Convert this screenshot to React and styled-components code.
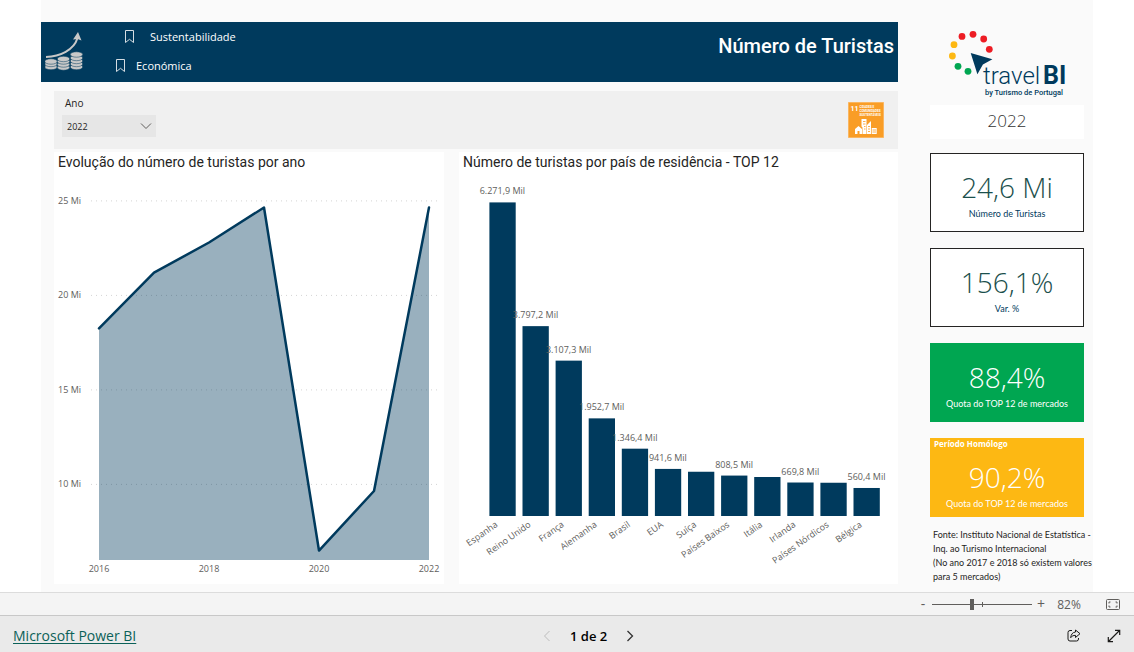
import { useState } from 'react';
import styled, { createGlobalStyle } from 'styled-components';

const COLORS = {
  navy: '#003a5d',
  text: '#252423',
  muted: '#605e5c',
  green: '#00a651',
  yellow: '#fdb813',
  red: '#ed1c24',
};

const FONTS = {
  base: "'Open Sans', 'Noto Sans', sans-serif",
  title: "Roboto, 'Liberation Sans', sans-serif",
  small: "Lato, 'Open Sans', sans-serif",
};

const YEARLY = [
  { year: 2016, value: 18.25 },
  { year: 2017, value: 21.2 },
  { year: 2018, value: 22.8 },
  { year: 2019, value: 24.65 },
  { year: 2020, value: 6.5 },
  { year: 2021, value: 9.65 },
  { year: 2022, value: 24.65 },
];

const COUNTRIES = [
  { name: 'Espanha', value: 6271.9, label: '6.271,9 Mil' },
  { name: 'Reino Unido', value: 3797.2, label: '3.797,2 Mil' },
  { name: 'França', value: 3107.3, label: '3.107,3 Mil' },
  { name: 'Alemanha', value: 1952.7, label: '1.952,7 Mil' },
  { name: 'Brasil', value: 1346.4, label: '1.346,4 Mil' },
  { name: 'EUA', value: 941.6, label: '941,6 Mil' },
  { name: 'Suíça', value: 885 },
  { name: 'Países Baixos', value: 808.5, label: '808,5 Mil' },
  { name: 'Itália', value: 780 },
  { name: 'Irlanda', value: 669.8, label: '669,8 Mil' },
  { name: 'Países Nórdicos', value: 665 },
  { name: 'Bélgica', value: 560.4, label: '560,4 Mil' },
];

const AreaChart = () => {
  const x = (year) => 45 + (year - 2016) * 55;
  const y = (value) => 388 - (value - 6) * 18.9;
  const line = YEARLY.map((d) => `${x(d.year)},${y(d.value)}`).join(' ');

  return (
    <Chart viewBox="0 0 390 412" role="img" aria-label="Evolução do número de turistas por ano">
      {[25, 20, 15, 10].map((tick) => (
        <g key={tick}>
          <GridLine x1="37" x2="385" y1={y(tick)} y2={y(tick)} />
          <ChartText x="4" y={y(tick) + 3}>
            {tick} Mi
          </ChartText>
        </g>
      ))}
      <polygon points={`45,388 ${line} 375,388`} fill={COLORS.navy} fillOpacity="0.4" />
      <polyline
        points={line}
        fill="none"
        stroke={COLORS.navy}
        strokeWidth="2.5"
        strokeLinejoin="round"
        strokeLinecap="round"
      />
      {[2016, 2018, 2020, 2022].map((year) => (
        <ChartText key={year} x={x(year)} y="400" textAnchor="middle">
          {year}
        </ChartText>
      ))}
    </Chart>
  );
};

const BarChart = () => {
  const x = (index) => 30.4 + index * 33.1;
  const height = (value) => value * 0.05;

  return (
    <Chart viewBox="0 0 439 412" role="img" aria-label="Número de turistas por país de residência">
      {COUNTRIES.map(({ name, value }, index) => (
        <rect
          key={name}
          x={x(index)}
          y={344 - height(value)}
          width="26.3"
          height={height(value)}
          fill={COLORS.navy}
        />
      ))}
      {COUNTRIES.map(({ name, value, label }, index) => (
        <g key={name}>
          <ChartText x={x(index) + 13} y={336 - height(value)} textAnchor="middle">
            {label}
          </ChartText>
          <ChartText
            textAnchor="end"
            transform={`translate(${x(index) + 9} 354) rotate(-35)`}
          >
            {name}
          </ChartText>
        </g>
      ))}
    </Chart>
  );
};

const BookmarkIcon = () => (
  <svg width="11" height="14" viewBox="0 0 11 14" fill="none" stroke="#d5dde3" aria-hidden="true">
    <path d="M1.500 .5h8v12L5.500 9.300 1.500 12.500z" />
  </svg>
);

const COINS = [
  { x: 6, levels: [36, 33, 30.5] },
  { x: 18.5, levels: [36.5, 33.5, 30.5, 28] },
  { x: 31.5, levels: [36, 33, 30, 27, 23.5] },
];

const CoinsIcon = () => (
  <svg width="40" height="42" viewBox="0 0 40 42" aria-hidden="true">
    <path d="M1 26C15 25.500 29 19 32.500 7" fill="none" stroke="#c8c8c8" strokeWidth="2" />
    <path d="M33 1l3.500 8.500-4-1.500-4.500 .5z" fill="#c8c8c8" />
    {COINS.map(({ x, levels }) =>
      levels.map((cy) => (
        <ellipse
          key={`${x}-${cy}`}
          cx={x}
          cy={cy}
          rx="6.200"
          ry="2.700"
          fill="#c8c8c8"
          stroke={COLORS.navy}
          strokeWidth=".5"
        />
      ))
    )}
  </svg>
);

const GoalIcon = () => (
  <svg width="36" height="36" viewBox="0 0 36 36" role="img" aria-label="Objetivo 11">
    <rect width="36" height="36" fill="#fbc27a" />
    <rect x=".7" y=".7" width="34.600" height="34.600" fill="#f99d26" />
    <g fill="#fff">
      <text x="2.500" y="9" fontFamily={FONTS.title} fontSize="7" fontWeight="700">
        11
      </text>
      <text fontFamily={FONTS.title} fontSize="3" fontWeight="700">
        <tspan x="11.500" y="6">CIDADES E</tspan>
        <tspan x="11.500" y="10">COMUNIDADES</tspan>
        <tspan x="11.500" y="14">SUSTENTÁVEIS</tspan>
      </text>
      <path d="M7 27l3.500-3 3.500 3v5h-2.500v-3h-2v3H7z" />
      <path d="M13.500 17h5v15h-4v-6.500l-1-1z" />
      <path d="M19 23l4-4v13h-4z" />
      <path d="M23.700 26h5v6h-5z" />
    </g>
    <path
      d="M15 19.500h2.500M15 22h2.500M16 24.500h1.500M16 27h1.500M20 24.500h2M20 27h2M20 29.500h2M24.500 28h3.500M24.500 30h3.500"
      stroke="#f99d26"
      strokeWidth=".8"
    />
  </svg>
);

const LOGO_DOTS = [
  { x: 20, y: 41.3, color: COLORS.green },
  { x: 10, y: 36.3, color: COLORS.green },
  { x: 4.4, y: 26, color: COLORS.yellow },
  { x: 6, y: 14.7, color: COLORS.yellow },
  { x: 14, y: 6.4, color: COLORS.red },
  { x: 25, y: 4.3, color: COLORS.red },
  { x: 35.7, y: 9, color: COLORS.red },
  { x: 41.3, y: 19.3, color: COLORS.red },
];

const Logo = () => (
  <svg width="118" height="68" viewBox="0 0 118 68" role="img" aria-label="travelBI">
    {LOGO_DOTS.map(({ x, y, color }) => (
      <circle key={`${x}-${y}`} cx={x} cy={y} r="3.400" fill={color} />
    ))}
    <path d="M22.700 23l21.700 6.300-9.500 5.200-5.500 9.800z" fill={COLORS.navy} />
    <g fill={COLORS.navy} fontFamily={FONTS.title}>
      <text x="35" y="54" fontSize="24" fontWeight="300">
        travel
      </text>
      <text x="95" y="54" fontSize="25" fontWeight="700">
        BI
      </text>
      <text x="37" y="65" fontSize="7.500" fontWeight="500">
        by Turismo de Portugal
      </text>
    </g>
  </svg>
);

const Kpi = ({ value, label, heading, variant }) => (
  <KpiCard $variant={variant}>
    {heading && <KpiHeading>{heading}</KpiHeading>}
    <KpiBody>
      <KpiValue>{value}</KpiValue>
      <KpiLabel $variant={variant}>{label}</KpiLabel>
    </KpiBody>
  </KpiCard>
);

const App = () => {
  const [year, setYear] = useState('2022');
  const [zoom, setZoom] = useState(82);

  return (
    <>
      <GlobalStyle />
      <Page>
        <Report>
          <Main>
            <Banner>
              <CoinsIcon />
              <BannerNav>
                <NavButton type="button" $indent>
                  <BookmarkIcon />
                  Sustentabilidade
                </NavButton>
                <NavButton type="button">
                  <BookmarkIcon />
                  Económica
                </NavButton>
              </BannerNav>
              <BannerTitle>Número de Turistas</BannerTitle>
            </Banner>
            <Content>
              <FilterBar>
                <Filter>
                  <FilterLabel htmlFor="ano">Ano</FilterLabel>
                  <SelectWrapper>
                    <Select id="ano" value={year} onChange={(e) => setYear(e.target.value)}>
                      {YEARLY.map((d) => (
                        <option key={d.year}>{d.year}</option>
                      ))}
                    </Select>
                    <svg width="12" height="8" viewBox="0 0 12 8" fill="none" stroke="#605e5c">
                      <path d="M1 1.500l5 5 5-5" />
                    </svg>
                  </SelectWrapper>
                </Filter>
                <GoalIcon />
              </FilterBar>
              <Charts>
                <Panel>
                  <PanelTitle>Evolução do número de turistas por ano</PanelTitle>
                  <AreaChart />
                </Panel>
                <Panel>
                  <PanelTitle>Número de turistas por país de residência - TOP 12</PanelTitle>
                  <BarChart />
                </Panel>
              </Charts>
            </Content>
          </Main>
          <Sidebar>
            <Logo />
            <YearBox>{year}</YearBox>
            <Kpis>
              <Kpi value="24,6 Mi" label="Número de Turistas" />
              <Kpi value="156,1%" label="Var. %" />
              <Kpi value="88,4%" label="Quota do TOP 12 de mercados" variant="green" />
              <Kpi
                value="90,2%"
                label="Quota do TOP 12 de mercados"
                heading="Período Homólogo"
                variant="yellow"
              />
            </Kpis>
            <Source>
              Fonte: Instituto Nacional de Estatística - Inq. ao Turismo Internacional
              <br />
              (No ano 2017 e 2018 só existem valores para 5 mercados)
            </Source>
          </Sidebar>
        </Report>
        <ZoomBar>
          <ZoomButton type="button" aria-label="Reduzir" onClick={() => setZoom(zoom - 10)}>
            -
          </ZoomButton>
          <ZoomSlider
            type="range"
            min="10"
            max="190"
            aria-label="Zoom"
            value={zoom}
            onChange={(e) => setZoom(Number(e.target.value))}
          />
          <ZoomButton type="button" aria-label="Ampliar" onClick={() => setZoom(zoom + 10)}>
            +
          </ZoomButton>
          <ZoomValue>{zoom}%</ZoomValue>
          <IconButton type="button" aria-label="Ajustar à página">
            <svg width="14" height="11" viewBox="0 0 14 11" fill="none" stroke="#605e5c">
              <rect x=".5" y=".5" width="13" height="10" rx="1" />
              <path d="M3 4.500V3h1.500M9.500 3H11v1.500M11 6.500V8H9.500M4.500 8H3V6.500" />
            </svg>
          </IconButton>
        </ZoomBar>
        <StatusBar>
          <BrandLink href="https://powerbi.microsoft.com">Microsoft Power BI</BrandLink>
          <Pager>
            <IconButton type="button" aria-label="Página anterior" disabled>
              <svg width="8" height="12" viewBox="0 0 8 12" fill="none" stroke="#bdbdbd">
                <path d="M6.500 1l-5 5 5 5" />
              </svg>
            </IconButton>
            <span>1 de 2</span>
            <IconButton type="button" aria-label="Página seguinte">
              <svg width="8" height="12" viewBox="0 0 8 12" fill="none" stroke="#333" strokeWidth="1.300">
                <path d="M1.500 1l5 5-5 5" />
              </svg>
            </IconButton>
          </Pager>
          <Actions>
            <IconButton type="button" aria-label="Partilhar">
              <svg width="14" height="13" viewBox="0 0 14 13" fill="none" stroke="#1b1a19" strokeLinejoin="round">
                <path d="M5 1.500H3a2 2 0 0 0-2 2V10a2 2 0 0 0 2 2h6.500a2 2 0 0 0 2-2V9" />
                <path d="M8.500 1l4.500 3.700-4.500 3.800V6.400C6.300 6.300 4.800 7 3.700 8.700 4 5.500 5.500 3.300 8.500 3z" />
              </svg>
            </IconButton>
            <IconButton type="button" aria-label="Ecrã inteiro">
              <svg width="14" height="14" viewBox="0 0 14 14" fill="none" stroke="#1b1a19" strokeWidth="1.200">
                <path d="M1.500 12.500l11-11M8 1.300h4.700V6M1.300 8v4.700H6" />
              </svg>
            </IconButton>
          </Actions>
        </StatusBar>
      </Page>
    </>
  );
};

const GlobalStyle = createGlobalStyle`
  *, *::before, *::after {
    box-sizing: border-box;
  }

  body {
    margin: 0;
    background: #fff;
    color: ${COLORS.text};
    font-family: ${FONTS.base};
  }

  button, select, input {
    font: inherit;
    color: inherit;
  }

  svg {
    flex-shrink: 0;
  }
`;

const Page = styled.div`
  display: flex;
  flex-direction: column;
  min-height: 100vh;
`;

const Report = styled.div`
  flex: 1;
  display: grid;
  grid-template-columns: minmax(0, 1fr) 163px;
  gap: 32px;
  margin: 0 41px;
  padding: 22px 0 7px;
  background: #fafafa;
`;

const Main = styled.main`
  display: flex;
  flex-direction: column;
  gap: 9px;
`;

const Banner = styled.header`
  display: flex;
  align-items: center;
  height: 60px;
  padding: 0 4px;
  background: ${COLORS.navy};
  color: #fff;
`;

const BannerNav = styled.nav`
  display: flex;
  flex-direction: column;
  align-items: flex-start;
  gap: 9px;
  margin: 0 0 2px 30px;
`;

const NavButton = styled.button`
  display: flex;
  align-items: center;
  gap: ${(p) => (p.$indent ? '15px' : '10px')};
  height: 20px;
  margin-left: ${(p) => (p.$indent ? '9px' : '0')};
  padding: 0;
  border: 0;
  background: none;
  font-size: 11px;
  cursor: pointer;
`;

const BannerTitle = styled.h1`
  margin: 0 0 12px auto;
  font-family: ${FONTS.title};
  font-size: 20px;
  line-height: 28px;
  font-weight: 500;
`;

const Content = styled.div`
  display: flex;
  flex-direction: column;
  gap: 3px;
  margin-left: 13px;
`;

const FilterBar = styled.section`
  display: flex;
  align-items: center;
  justify-content: space-between;
  height: 58px;
  padding: 0 14px 0 8px;
  background: #f0f0f0;
`;

const Filter = styled.div`
  display: flex;
  flex-direction: column;
  gap: 4px;
  margin-bottom: 8px;
`;

const FilterLabel = styled.label`
  padding-left: 3px;
  font-size: 10px;
  line-height: 16px;
`;

const SelectWrapper = styled.div`
  display: grid;
  align-items: center;
  width: 94px;

  & > * {
    grid-area: 1 / 1;
  }

  & > svg {
    justify-self: end;
    margin-right: 4px;
    pointer-events: none;
  }
`;

const Select = styled.select`
  appearance: none;
  width: 100%;
  height: 22px;
  padding: 0 5px;
  border: 0;
  border-radius: 0;
  background: #e6e6e6;
  font-size: 9px;
`;

const Charts = styled.div`
  display: grid;
  grid-template-columns: 390fr 439fr;
  gap: 15px;
  align-items: start;
`;

const Panel = styled.section`
  background: #fff;
`;

const PanelTitle = styled.h2`
  margin: 0;
  padding-left: 4px;
  font-family: ${FONTS.title};
  font-size: 14px;
  line-height: 20px;
  font-weight: 400;
`;

const Chart = styled.svg`
  display: block;
  width: 100%;
`;

const ChartText = styled.text`
  fill: ${COLORS.muted};
  font-family: ${FONTS.base};
  font-size: 9px;
`;

const GridLine = styled.line`
  stroke: #d4d4d4;
  stroke-width: 1;
  stroke-dasharray: 1 4;
`;

const Sidebar = styled.aside`
  padding-top: 8px;

  & > svg {
    display: block;
    margin-left: 18px;
  }
`;

const YearBox = styled.div`
  margin: 7px 9px 14px 0;
  padding-bottom: 2px;
  background: #fff;
  color: #333;
  font-size: 17px;
  line-height: 32px;
  font-weight: 300;
  text-align: center;
`;

const Kpis = styled.div`
  display: grid;
  gap: 16px;
  margin-right: 9px;
`;

const VARIANTS = {
  green: { background: COLORS.green, value: '#fff', label: '#fff', border: COLORS.green },
  yellow: { background: COLORS.yellow, value: '#fff', label: '#fff', border: COLORS.yellow },
  plain: { background: '#fff', value: '#1b4f4c', label: COLORS.navy, border: COLORS.text },
};

const variant = (key) => (p) => VARIANTS[p.$variant ?? 'plain'][key];

const KpiCard = styled.article`
  display: flex;
  flex-direction: column;
  height: 79px;
  border: 1px solid ${variant('border')};
  background: ${variant('background')};
  color: ${variant('value')};
`;

const KpiHeading = styled.h3`
  margin: 0;
  padding-left: 3px;
  font-size: 8px;
  line-height: 10px;
  font-weight: 700;
`;

const KpiBody = styled.div`
  flex: 1;
  display: flex;
  flex-direction: column;
  justify-content: center;
  gap: 2px;
  padding-top: 6px;
  text-align: center;
`;

const KpiValue = styled.strong`
  font-size: 28px;
  line-height: 34px;
  font-weight: 300;
`;

const KpiLabel = styled.span`
  color: ${variant('label')};
  font-family: ${FONTS.small};
  font-size: 9px;
  line-height: 16px;
`;

const Source = styled.p`
  margin: 11px 0 0 3px;
  font-family: ${FONTS.small};
  font-size: 9px;
  line-height: 14px;
`;

const ZoomBar = styled.div`
  display: flex;
  align-items: center;
  justify-content: flex-end;
  height: 23px;
  padding-right: 6px;
  border-top: 1px solid #dcdcdc;
  background: #f4f4f4;
  color: ${COLORS.muted};
`;

const ZoomButton = styled.button`
  width: 18px;
  padding: 0;
  border: 0;
  background: none;
  font-size: 14px;
  line-height: 20px;
  cursor: pointer;
`;

const ZoomSlider = styled.input`
  appearance: none;
  width: 100px;
  height: 12px;
  margin: 0;
  background:
    linear-gradient(${COLORS.muted}, ${COLORS.muted}) center / 100% 1px no-repeat,
    linear-gradient(${COLORS.muted}, ${COLORS.muted}) center / 1px 5px no-repeat;

  &::-webkit-slider-thumb {
    appearance: none;
    width: 4px;
    height: 11px;
    background: ${COLORS.muted};
  }
`;

const ZoomValue = styled.output`
  width: 38px;
  margin-right: 10px;
  font-size: 12px;
  text-align: center;
`;

const IconButton = styled.button`
  display: grid;
  place-items: center;
  width: 30px;
  height: 20px;
  padding: 0;
  border: 0;
  background: none;
  cursor: pointer;
`;

const StatusBar = styled.footer`
  display: flex;
  align-items: center;
  justify-content: space-between;
  height: 37px;
  padding: 3px 5px 0 13px;
  border-top: 1px solid #c8c8c8;
  background: #eaeaea;
`;

const BrandLink = styled.a`
  color: #0b6158;
  font-size: 14px;
  text-underline-offset: 2px;
`;

const Pager = styled.div`
  display: flex;
  align-items: center;
  gap: 8px;
  color: #000;
  font-size: 13px;
  font-weight: 600;
`;

const Actions = styled.div`
  display: flex;
  gap: 10px;
  padding-left: 18px;
`;

export default App;
